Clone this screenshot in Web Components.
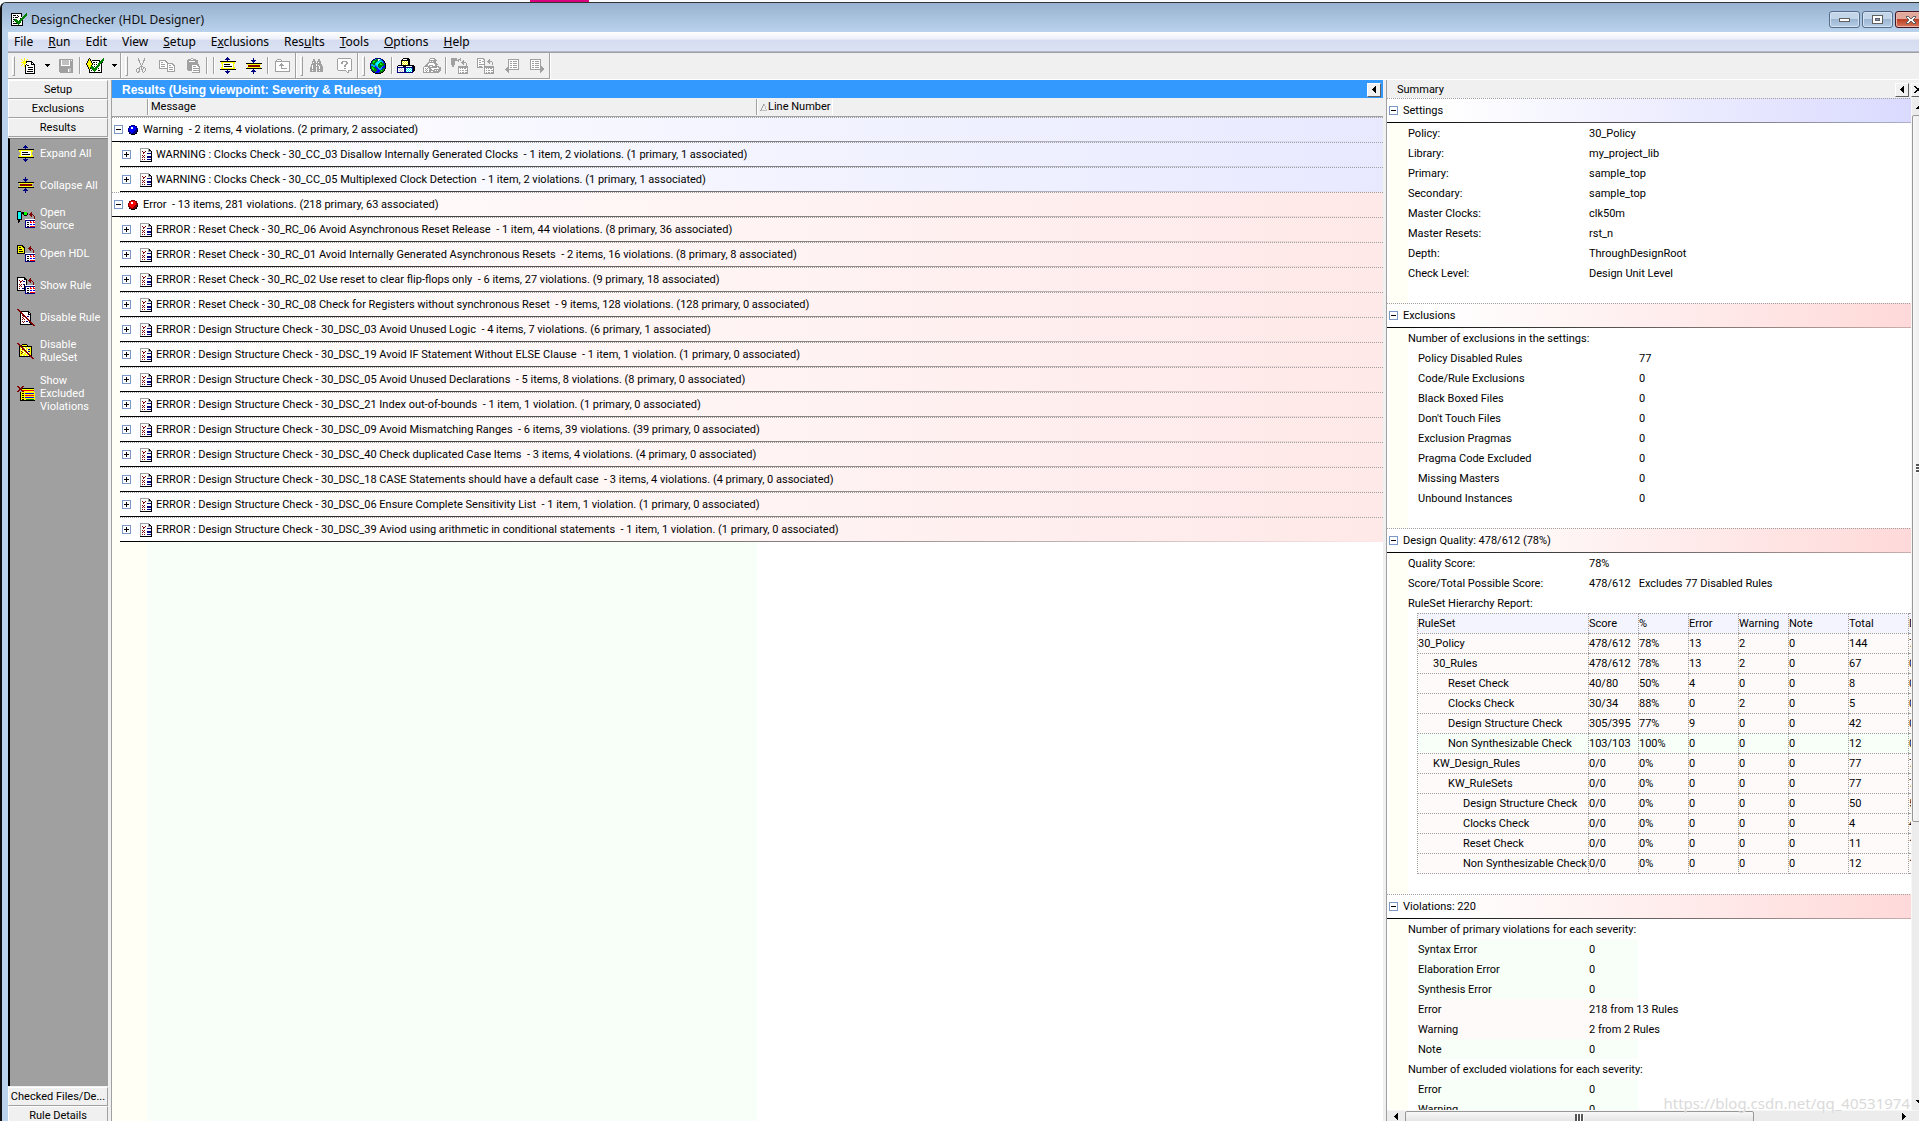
<!DOCTYPE html>
<html lang="en">
<head>
<meta charset="utf-8">
<title>DesignChecker (HDL Designer)</title>
<style>
  html, body { height: 100%; }
  body {
    margin: 0; overflow: hidden; background: #f8fbfd;
    --ui: Roboto, "Liberation Sans", sans-serif;
    --chrome: "Noto Sans", sans-serif;
    font: 11px/16px var(--ui); color: #000;
  }
</style>
</head>
<body>
<dc-app></dc-app>
<script>
const COLORS = { k:'#000', y:'#ffff00', w:'#fff', g:'#a0a0a0', b:'#000080', r:'#800000', c:'#00ffff', n:'#00ff00',
  R:'#ff0000', B:'#0000ff', G:'#008000', t:'#00a8e8', l:'#c0c0c0', d:'#606060', s:'#7b98c8', o:'#808000' };
const ART = {
  expand: `.......b........
......bbb.......
.....bbbbb......
.......b........
kkkkkkkkkkkkkkkk
.yyyyyyyyyyyyyy.
.yywwwwwwwwwwyy.
..ywkkkkkkwwwy..
..ywwwwwwwwwwy..
..ywkkkkkkkkwy..
.yywwwwwwwwwwyy.
.yyyyyyyyyyyyyy.
kkkkkkkkkkkkkkkk
.......b........
.....bbbbb......
......bbb.......
.......b........`,
  collapse: `.......b........
.......b........
.....bbbbb......
......bbb.......
.......b........
kkkkkkkkkkkkkkkk
.yyyyyyyyyyyyyy.
..rrrrrrrrrrrr..
..rrrrrrrrrrrr..
.yyyyyyyyyyyyyy.
kkkkkkkkkkkkkkkk
.......b........
......bbb.......
.....bbbbb......
.......b........
.......b........`,
  newdoc: `...y............
y..y..y.........
.y.y.y..........
..yyykkkkkk.....
yyyyykwwwwkk....
..yyywwwwwkwk...
.y.y.kwwwwkkkk..
y..ykwkkwwwwwk..
...ykwwwwwwwwk..
....kwwkkkkkwk..
....kwwwwwwwwk..
....kwwkkkkkwk..
....kwwwwwwwwk..
....kwkkkkkkwk..
....kwwwwwwwwk..
....kkkkkkkkkk..`,
  save: `gggggggggggggg
ggwlllllllwgwg
ggwlllllllwggg
ggwlllllllwggg
ggwlllllllwggg
ggwlllllllwggg
ggwwwwwwwwwggg
gggggggggggggg
gggggggggggggg
ggggggggggllgg
gggggggggwllgg
gggggggggwllgg
gggggggggwllgg
.ggggggggggggg`,
  check: `...k.............G
..kyk...........GG
..kyk.kkkkkkkk.GGG
.kyyykwwwwwwwkGGG.
.kyyykwkkwkwwGGGk.
kyyyyykwwwwwGGGk..
kyyyyykwkwkwGGwk..
.kyyykwwwwwGGGwk..
.kyyyGGwkwGGGwwk..
..kyGGGGwGGGwwwk..
..kykGGGGGGwkwwk..
...kwwGGGGGwwwwk..
...kwkwGGGwwkkwk..
...kwwwwGwwwwwwk..
...kkkkkkkkkkkkk..`,
  app: `kkkkkkkkkkk....G
kwwwwwwwwwk...GG
kwkkkwkwwwk..GGG
kwwwwwwkwwk.GGG.
kwkwkkkwwwwGGG..
kwwwwwwwwkGGG...
kwkkGGwwwGGG....
kwwGGGGwGGGk....
kwkwGGGGGGwk....
kwwwwGGGGGwk....
kwkkkkGGGwwk....
kwwwwwwGwwwk....
kkkkkkkkkkkk....`,
  cut: `...g.....g...
...g.....g...
...gg...gg...
....g...g....
....g...g....
.....g.g.....
.....g.g.....
......g......
.....ggg.....
....g.g.gg...
..ggg.g.g.g..
.g..g.gg..g..
.g..g..g..g..
.g.gg..g.g...
..gg....g....`,
  copy: `ggggggg.........
gwwwwwgg........
gwggwwwgg.......
gwwwwwwwgggggg..
gwggggwwgwwwwgg.
gwwwwwwwgwggwwgg
gwggggwwgwwwwwwg
gwwwwwwwgwggggwg
gggggggggwwwwwwg
........gwggggwg
........gwwwwwwg
........gggggggg`,
  paste: `.....gg........
..gggwwggg.....
.ggggggggggg...
.ggwwwwwwggg...
.ggggggggggg...
.ggggggggggg...
.gggggggggggg..
.gggggwwwwwgg..
.gggggwgggwwgg.
.gggggwwwwwwwg.
.gggggwggggggg.
.gggggwwwwwwwg.
..ggggwggggggg.
......wwwwwwwg.
......gggggggg.`,
  folder: `..gggg.........
.gwwwwg........
ggggggggggggggg
gwwwwwwwwwwwwwg
gwwwwwgwwwwwwwg
gwwwwgggwwwwwwg
gwwwgggggwwwwwg
gwwwwwgwwwwwwwg
gwwwwwgwwwwwwwg
gwwwwwggggggwwg
gwwwwwwwwwwwwwg
gwwwwwwwwwwwwwg
ggggggggggggggg`,
  find: `...gg...gg.....
...gg...gg.....
..gggg.gggg....
..gwgg.gwgg....
..ggggggggg....
.gggggwggggg...
.gwgggwgwggg...
.gwggggggwggg..
ggwgggwggwggg..
ggwggg.ggwggg..
gggggg.gggggg..
ggwggg.ggwggg..
gggggg.gggggg..`,
  help: `.ggggggggggggg.
gwwwwwwwwwwwwwg
gwwwwwwwwwwwwwg
gwwwwgggggwwwwg
gwwwggwwwggwwwg
gwwwggwwwggwwwg
gwwwwwwwggwwwwg
gwwwwwwggwwwwwg
gwwwwwwggwwwwwg
gwwwwwwwwwwwwwg
gwwwwwwggwwwwwg
gwwwwwwwwwwwwwg
.ggggggggwwgggg
.........gwg...
..........gg...`,
  globe: `.....bbbbbb.....
...bbtGGwwtbb...
..bGGGGGwtttbk..
.bGnnGGttccttBk.
.bGnGGtcccGGtBk.
bGGGGtcccGnGGGBk
bttGGtccGGnnGGGk
bttttttcGGGGGGBk
bGGttBttGGGGtBBk
bGnGGBBttGGtBBBk
bGnnGGBBttttBGGk
.bGnGGGBBttBGGk.
.bGGGGGBBBGnGGk.
..kBGGBBBBGGGk..
...kkBBBBGGkk...
.....kkkkkk.....`,
  cubes: `......kkkkkk......
.....kwwwwkkk.....
....kkkkkkkkk.....
....kywywywkk.....
....kwywywykk.....
....kywywywkk.....
....kwywywykk.....
.kkkkkkkkkkkkkkkk.
kwwwwwkkkwwwwwwkkk
bbbbbbbbbbbbbbbbkk
bwlwlwwbbwcwcwcbkk
bwwlwlwbbcwcwcwbkk
bwlwlwwbbwcwcwcbkk
bwwlwlwbbcwcwcwbk.
bbbbbbbbbbbbbbbb..`,
  cubesgray: `.......ggggg......
......gwwwwgg.....
......gggggggg....
......gwgwggg.....
.....gggggggg.....
....ggwwwwwggg....
...ggwwwwwwwggg...
..gggwggggwwgg....
.ggggggwwggggggg..
gwwwwgggggggggwggg
gwgwgwggwwwwwwwwgg
gwwgwwgggwwggggggg
gwgwgwggggggwgwggg
gwwgwwggwwggggggg.
gggggggggggggggg..`,
  src: `gggggg...g........
gggggg.ggg........
gggggggg.g..g.....
gggg...g...gg.....
gggg......ggggg...
gggg.......gg..g..
gggg........g..g..
.gg............g..
.gg....gggggggggg.
.......gggggggggg.
.......gwgwgwggwg.
.......gwwwwwwwwg.
.......gwgwggwggg.
.......gwwwwwwwwg.
.......gwgwggwggg.
.......gggggggggg.`,
  hdl: `ggggggg...........
gwwwwwgg....g.....
gwggwwwg...gg.....
gwwwwggg..ggggg...
gwggwwwg...gg..g..
gwwwwwwg....g..g..
gwgggggg.......g..
gwwwwwwg..........
gwggg..gggggggggg.
gggggg.gggggggggg.
.......gwgwgwggwg.
.......gwwwwwwwwg.
.......gwgwggwggg.
.......gwwwwwwwwg.
.......gwgwggwggg.
.......gggggggggg.`,
  prev: `...ggggggggggg
...gwwwwwwwwwg
...gwggwggggwg
...gwwwwwwwwwg
...gwggwggggwg
...gwwwwwwwwwg
...gwggwggggwg
...gwwwwwwwwwg
..ggwggwggggwg
.gggwwwwwwwwwg
gggggggggggggg
.ggg..........
..gg..........
...g..........`,
  next: `ggggggggggg...
gwwwwwwwwwg...
gwggwggggwg...
gwwwwwwwwwg...
gwggwggggwg...
gwwwwwwwwwg...
gwggwggggwg...
gwwwwwwwwwgg..
gwggwggggwggg.
gwwwwwwwwwgggg
gggggggggggggg
..........ggg.
..........gg..
..........g...`,
  ball_blue: `...bbbb...
.bbBBBBbb.
.bBwwBBBb.
bBBwwBBBbb
bBBBBBBBbb
bBBBBBBbbk
bbBBBBbbbk
.bbBBbbbk.
.kbbbbbkk.
...kkkk...`,
  ball_red: `...rrrr...
.rrRRRRrr.
.rRwwRRRr.
rRRwwRRRrr
rRRRRRRRrr
rRRRRRRrrk
rrRRRRrrrk
.rrRRrrrk.
.krrrrrkk.
...kkkk...`,
  rule: `ggggggggg...
gwwwwwwwgk..
gwwwwwwwgkk.
gwrwwrwwgggk
gwwrrwwwwwwk
gwwrwwwbbbbk
gwwwwwwwwwwk
gwrwrwwwwwwk
gwwrwwwbbbbk
gwrwrwwbbbbk
gwwwwwwwwwwk
gwrwrwwbbbbk
gwwwwwwwwwwk
kkkkkkkkkkkk`,
  opensource: `kkkk..............
kccckkknnn....r...
kccckkknnnk..rr...
kccck.knnnk.rrrr..
kccck..kkk...rr.r.
kccck.........r..r
kccck............r
kccck............r
kkkkk...wwwwwwwwww
.kk.....bbbbbbbbbb
.kk.....bwwwwRwwRw
.k......bwkkwRRwRR
........bwwwwwwwww
........bwkkwBBwBB
........bwwwwwwwww
........bwkkwRRRRR
........bbbbbbbbbb`,
  openhdl: `kkkkkk............
kyyyykk......r....
kykkyykk....rr....
kyyyyyyk...rrrr...
kykkkyyk....rr.r..
kyyyyyyk.....r..r.
kykkkkyk........r.
kyyyyyyk........r.
kkkkkkkkwwwwwwwwww
........bbbbbbbbbb
........bwwwwRwwRw
........bwkkwRRwRR
........bwwwwwwwww
........bwkkwBBwBB
........bwwwwwwwww
........bwkkwRRRRR
........bbbbbbbbbb`,
  showrule: `kkkkkkkk..........
kwwwwwwkk....r....
kwwwwwwkkk..rr....
kwrwwrwwwk.rrrr...
kwwrrwbbwk..rr.r..
kwwrwwwwwk...r..r.
kwwwwwwwwk......r.
kwrwrwbbwk......r.
kwwrwwwkwwwwwwwwww
kwrwrwwkbbbbbbbbbb
kwwwwwwkbwwwwRwwRw
kwrwwbbkbwkkwRRwRR
kwwwwwwkbwwwwwwwww
kkkkkkkkbwkkwBBwBB
........bwwwwwwwww
........bwkkwRRRRR
........bbbbbbbbbb`,
  disrule: `rr................
.rr...............
..rrkkkkkkkk......
...rrwwwwwwkk.....
...krrwwwwwkwk....
...kwrrwwwwkkk....
...kwrrrwwwwwk....
...kwwrrrwbbwk....
...kwrwwrrwwwk....
...kwwrwwrrwwk....
...kwrwrwwrrwk....
...kwwwwwwwrrk....
...kwrwrwbbwrr....
...kwwrwwwwwkrr...
...kwwwwwwwwwkrr..
...kkkkkkkkkkkkrr.
................rr`,
  disset: `rr................
.rr..kkkkk........
..rrkyyyyyk.......
..krrkkkkkkkkkk...
..kyrrywyywyyyk...
..kywrrywyywyyk...
..kyyrrrwywbbyk...
..kywyyrrywyyyk...
..kyrywyrrwbbyk...
..kyyrywyrrwyyk...
..kyrywyywrryyk...
..kyyyyyyyyrryk...
..kyywyywyywrrk...
..kkkkkkkkkkkrr...
..............rr..
...............rr.`,
  showex: `rr...rr...........
.rr.rr............
..rrrkkkkkkkkkkkk.
..rrryyyyyyyyyyyy.
.rr.rrRRRRRRRRRRR.
rr...rryyyyyyyyyy.
...kyyyyyyyyyyyyyy
...kykkyBBBBBBBBBy
...kyyyyyyyyyyyyyy
...kykkyRRRRRRRRRy
...kyyyyyyyyyyyyyy
...kykkyBBBBBBBBBy
...kyyyyyyyyyyyyyy
...kykkyyGGGGGGGGy
...kkkkkkkkkkkkkkk`,
  plus: `sssssssss
swwwwwwws
swwwkwwws
swwwkwwws
swkkkkkws
swwwkwwws
swwwkwwws
swwwwwwws
sssssssss`,
  minus: `sssssssss
swwwwwwws
swwwwwwws
swwwwwwws
swkkkkkws
swwwwwwws
swwwwwwws
swwwwwwws
sssssssss`,
  drop: `kkkkk
.kkk.
..k..`,
  left: `...k
..kk
.kkk
kkkk
.kkk
..kk
...k`,
  right: `k...
kk..
kkk.
kkkk
kkk.
kk..
k...`,
  up: `...k...
..kkk..
.kkkkk.
kkkkkkk`,
  down: `kkkkkkk
.kkkkk.
..kkk..
...k...`,
  close: `kk....kk
.kk..kk.
..kkkk..
...kk...
..kkkk..
.kk..kk.
kk....kk`,
  sort: `...gl..
...gl..
..g..l.
..g..l.
.g...l.
.g....l
gllllll`,
  min: `ddddddddddd
dwwwwwwwwwd
dwwwwwwwwwd
ddddddddddd`,
  max: `ddddddddddd
dwwwwwwwwwd
dwwwwwwwwwd
dwwdddddwwd
dwwdsssdwwd
dwwdddddwwd
dwwwwwwwwwd
dwwwwwwwwwd
ddddddddddd`,
  wclose: `ddd....ddd
dwwd..dwwd
.dwwddwwd.
..dwwwwd..
..dwwwwd..
.dwwddwwd.
dwwd..dwwd
ddd....ddd`
};
const el = (name, html) => customElements.define(name, class extends HTMLElement {
  connectedCallback() {
    if (this.shadowRoot) return;
    const t = document.createElement('template');
    t.innerHTML = `<style>*{box-sizing:border-box}button{font:inherit;color:inherit;border:0;padding:0;margin:0;background:none;white-space:nowrap}</style>` +
      (typeof html === 'function' ? html(this) : html);
    this.attachShadow({ mode: 'open' }).append(t.content.cloneNode(true));
  }
});
const ic = n => `<dc-icon name="${n}"></dc-icon>`;

el('dc-icon', h => {
  const rows = ART[h.getAttribute('name')].split('\n'), w = Math.max(...rows.map(r => r.length));
  let s = '';
  rows.forEach((r, y) => { for (let x = 0; x < r.length;) {
    let e = x + 1; while (r[e] === r[x]) e++;
    if (COLORS[r[x]]) s += `<rect x="${x}" y="${y}" width="${e - x}" height="1" fill="${COLORS[r[x]]}"/>`;
    x = e;
  } });
  return `<style>:host{display:block;flex:none}svg{display:block}</style>
  <svg width="${w}" height="${rows.length}" shape-rendering="crispEdges" aria-hidden="true">${s}</svg>`;
});

el('dc-title', `<style>
  :host{display:flex;align-items:center;height:29px;padding:4px 0 0 9px;box-sizing:border-box;background:linear-gradient(#97b2cf,#bad2ec);font:12px/18px var(--chrome)}
  h1{font:inherit;margin:0;padding-left:4px;flex:1;color:#111}
  div{display:flex;gap:2px}
  button{width:31px;height:17px;border:1px solid #536c8a;border-radius:3px;background:linear-gradient(#c3d5e8 45%,#9cb6d2 50%,#b6cde6);display:grid;place-items:center;box-shadow:inset 0 0 0 1px #d5e3f2}
  .x{background:linear-gradient(#e2a89c 45%,#b93f26 50%,#d8775c);border-color:#431422;box-shadow:inset 0 0 0 1px #e9b5a8;margin-right:-7px}
</style>${ic('app')}<h1>DesignChecker (HDL Designer)</h1>
<div><button aria-label="Minimize">${ic('min')}</button><button aria-label="Maximize">${ic('max')}</button><button class="x" aria-label="Close">${ic('wclose')}</button></div>`);

el('dc-menu', `<style>
  :host{display:flex;gap:15px;padding-left:6px;height:20px;align-items:center;background:linear-gradient(#fff,#eef1f9 35%,#d5dcf0 45%,#dbe2f3);border-bottom:1px solid #b4b8d0;font:12px/18px var(--chrome)}
</style>` + ['File','<u>R</u>un','Edit','View','<u>S</u>etup','E<u>x</u>clusions','Res<u>u</u>lts','<u>T</u>ools','<u>O</u>ptions','<u>H</u>elp'].map(t => `<button>${t}</button>`).join(''));

const tool = (n, w = 26) => `<button style="width:${w}px" aria-label="${n}">${ic(n)}</button>`;
el('dc-toolbar', `<style>
  :host{display:flex;height:28px;box-sizing:border-box;background:#f0f0f0;border-bottom:1px solid #fff;border-top:1px solid #a0a0a0}
  .band{display:flex;align-items:center;border-right:1px solid #a0a0a0;border-bottom:1px solid #a0a0a0;box-shadow:1px 0 #fff;padding-left:4px}
  .band::before{content:"";box-sizing:border-box;width:3px;height:20px;border:1px solid;border-color:#fff #a0a0a0 #a0a0a0 #fff}
  button{display:grid;place-items:center;height:22px}
  i{width:2px;height:17px;border-left:1px solid #a0a0a0;border-right:1px solid #fff}
</style>
<div class="band">${tool('newdoc',27)}${tool('drop',11)}${tool('save',26)}<i></i>${tool('check',28)}${tool('drop',11)}</div>
<div class="band">${tool('cut')}${tool('copy')}${tool('paste')}<i></i><i style="margin-left:5px"></i>${tool('expand')}${tool('collapse')}<i></i>${tool('folder')}</div>
<div class="band">${tool('find',28)}${tool('help')}</div>
<div class="band">${tool('globe')}<i></i>${tool('cubes')}${tool('cubesgray')}<i></i>${tool('src')}${tool('hdl')}${tool('prev')}${tool('next',24)}</div>`);

el('dc-side', `<style>
  :host{display:flex;flex-direction:column;width:100px;flex:none;background:#f0f0f0;margin-bottom:-4px}
  .tab{flex:none;height:19px;line-height:18px;text-align:center;border:1px solid;border-color:#fff #a0a0a0 #a0a0a0 #fff;overflow:hidden}
  nav{flex:1;background:#a0a0a0;border-left:2px solid #000;border-top:1px solid #808080;margin:1px 0 1px 0;padding:5px 0 0 6px;display:flex;flex-direction:column;gap:10px}
  nav button{display:grid;grid-template-columns:20px 1fr;column-gap:4px;align-items:center;justify-items:center;text-align:left;color:#fff;line-height:13px;min-height:22px}
  nav button:first-child{margin-top:-2px}
  span{justify-self:start}
</style>
<button class="tab">Setup</button><button class="tab">Exclusions</button><button class="tab">Results</button>
<nav>` + [['expand','Expand All'],['collapse','Collapse All'],['opensource','Open<br>Source'],['openhdl','Open HDL'],['showrule','Show Rule'],['disrule','Disable Rule'],['disset','Disable<br>RuleSet'],['showex','Show<br>Excluded<br>Violations']].map(([i,t]) => `<button>${ic(i)}<span>${t}</span></button>`).join('') +
`</nav><button class="tab">Checked Files/De...</button><button class="tab">Rule Details</button>`);

el('dc-row', h => `<style>
  :host{display:flex;align-items:center;height:25px;padding-left:2px;box-sizing:border-box;
    background:linear-gradient(90deg,#000,transparent) bottom/100% 1px no-repeat,repeating-linear-gradient(90deg,#a0a0a0 0 1px,transparent 1px 2px) top/100% 1px no-repeat,linear-gradient(90deg,#fff,var(--tint,#ffe8e8))}
  :host([kind=warning]){--tint:#e8e9ff}
  :host([child]){margin-left:8px}
  .i{width:20px;display:grid;place-items:center}
  :host([child]) .i{width:25px;padding-left:5px}
  .t{white-space:pre}
</style>${ic(h.hasAttribute('child') ? 'plus' : 'minus')}<div class="i">${ic(h.hasAttribute('child') ? 'rule' : h.getAttribute('kind') === 'warning' ? 'ball_blue' : 'ball_red')}</div><div class="t"><slot></slot></div>`);

const W = 'WARNING : Clocks Check - ', R = 'ERROR : Reset Check - ', D = 'ERROR : Design Structure Check - ';
const ROWS = [
  ['warning',0,'Warning  - 2 items, 4 violations. (2 primary, 2 associated)'],
  ['warning',1,W+'30_CC_03 Disallow Internally Generated Clocks  - 1 item, 2 violations. (1 primary, 1 associated)'],
  ['warning',1,W+'30_CC_05 Multiplexed Clock Detection  - 1 item, 2 violations. (1 primary, 1 associated)'],
  ['error',0,'Error  - 13 items, 281 violations. (218 primary, 63 associated)'],
  ['error',1,R+'30_RC_06 Avoid Asynchronous Reset Release  - 1 item, 44 violations. (8 primary, 36 associated)'],
  ['error',1,R+'30_RC_01 Avoid Internally Generated Asynchronous Resets  - 2 items, 16 violations. (8 primary, 8 associated)'],
  ['error',1,R+'30_RC_02 Use reset to clear flip-flops only  - 6 items, 27 violations. (9 primary, 18 associated)'],
  ['error',1,R+'30_RC_08 Check for Registers without synchronous Reset  - 9 items, 128 violations. (128 primary, 0 associated)'],
  ['error',1,D+'30_DSC_03 Avoid Unused Logic  - 4 items, 7 violations. (6 primary, 1 associated)'],
  ['error',1,D+'30_DSC_19 Avoid IF Statement Without ELSE Clause  - 1 item, 1 violation. (1 primary, 0 associated)'],
  ['error',1,D+'30_DSC_05 Avoid Unused Declarations  - 5 items, 8 violations. (8 primary, 0 associated)'],
  ['error',1,D+'30_DSC_21 Index out-of-bounds  - 1 item, 1 violation. (1 primary, 0 associated)'],
  ['error',1,D+'30_DSC_09 Avoid Mismatching Ranges  - 6 items, 39 violations. (39 primary, 0 associated)'],
  ['error',1,D+'30_DSC_40 Check duplicated Case Items  - 3 items, 4 violations. (4 primary, 0 associated)'],
  ['error',1,D+'30_DSC_18 CASE Statements should have a default case  - 3 items, 4 violations. (4 primary, 0 associated)'],
  ['error',1,D+'30_DSC_06 Ensure Complete Sensitivity List  - 1 item, 1 violation. (1 primary, 0 associated)'],
  ['error',1,D+'30_DSC_39 Aviod using arithmetic in conditional statements  - 1 item, 1 violation. (1 primary, 0 associated)']];
const SQ = `.sq{width:14px;height:14px;background:#f0f0f0;border:1px solid;border-color:#fff #606060 #606060 #fff;display:grid;place-items:center;flex:none;overflow:hidden}`;
el('dc-results', `<style>${SQ}
  :host{display:flex;flex-direction:column;flex:1;min-width:0;border-left:1px solid #a0a0a0;background:#fff}
  header{display:flex;align-items:center;justify-content:space-between;height:18px;flex:none;padding:1px 2px 0 10px;background:#3399ff;color:#fff}
  h2{font:bold 12px/16px "Liberation Sans",sans-serif;margin:0}
  .cols{display:flex;height:19px;flex:none;background:#f0f0f0;border-bottom:1px solid #a0a0a0}
  .cols button{text-align:left;padding-left:3px;border-right:1px solid #a0a0a0;box-shadow:1px 0 #fff;display:flex;align-items:center;gap:1px;margin:1px 0}
  .a{width:36px}.m{width:609px}.cols .l{width:76px;border-color:#fff;box-shadow:none}
  .body{flex:1;background:linear-gradient(90deg,#fffff5 35px,#f8fff8 35px 645px,#fff 645px)}
</style>
<header><h2>Results (Using viewpoint: Severity &amp; Ruleset)</h2><button class="sq" aria-label="Collapse">${ic('left')}</button></header>
<div class="cols"><button class="a" aria-label="Icon column"></button><button class="m">Message</button><button class="l">${ic('sort')}Line Number</button></div>
<div class="body">` + ROWS.map(([k,c,t]) => `<dc-row kind="${k}" ${c ? 'child' : ''}>${t}</dc-row>`).join('') + `</div>`);

el('dc-section', `<style>
  :host{display:block}
  h3{font:inherit;margin:0;height:25px;display:flex;align-items:center;gap:5px;padding-left:2px;
   background:linear-gradient(90deg,#000,#0003) bottom/100% 1px no-repeat,repeating-linear-gradient(90deg,#a0a0a0 0 1px,transparent 1px 2px) top/100% 1px no-repeat,linear-gradient(90deg,#fff 10%,var(--tint,#ffd9d9))}
  :host([blue]){--tint:#dadaff}
  div{padding:0 0 20px 21px;background:linear-gradient(90deg,#fff 2px,#fffff5 2px 21px,#fff 21px)}
</style><h3>${ic('minus')}<slot name="title"></slot></h3><div><slot></slot></div>`);

el('dc-field', h => `<style>
  :host{display:grid;grid-template-columns:181px auto 1fr;box-sizing:border-box;padding-top:1px;line-height:20px;height:20px;white-space:nowrap}
  :host([sub]){margin-left:10px;grid-template-columns:171px auto 1fr;background:linear-gradient(90deg,var(--bg,transparent) 220px,transparent 220px)}
  :host([wide]){grid-template-columns:221px auto 1fr}
  :host([tone=ok]){--bg:#f8fff8}:host([tone=bad]){--bg:#fffafa}
  .n{padding-left:8px}
</style><span><slot></slot></span><span>${h.getAttribute('value') || ''}</span><span class="n">${h.getAttribute('note') || ''}</span>`);

const T = [['30_Policy',0,'478/612','78%',13,2,0,144,77],['30_Rules',1,'478/612','78%',13,2,0,67,0],['Reset Check',2,'40/80','50%',4,0,0,8,0],['Clocks Check',2,'30/34','88%',0,2,0,5,0],['Design Structure Check',2,'305/395','77%',9,0,0,42,0],['Non Synthesizable Check',2,'103/103','100%',0,0,0,12,0],['KW_Design_Rules',1,'0/0','0%',0,0,0,77,77],['KW_RuleSets',2,'0/0','0%',0,0,0,77,77],['Design Structure Check',3,'0/0','0%',0,0,0,50,50],['Clocks Check',3,'0/0','0%',0,0,0,4,4],['Reset Check',3,'0/0','0%',0,0,0,11,11],['Non Synthesizable Check',3,'0/0','0%',0,0,0,12,12]];
el('dc-report', `<style>
  :host{display:block;margin-left:9px;overflow:hidden}
  table{border-collapse:separate;border-spacing:0;table-layout:fixed;width:542px;border-left:1px dotted #a0a0a0}
  th,td{font-weight:normal;text-align:left;padding:0;height:20px;line-height:19px;border-top:1px dotted #a0a0a0;border-right:1px dotted #a0a0a0;background:#fffafa;white-space:nowrap}
  th{background:#f4f4ff}.ok td{background:#f8fff8}
  tr:last-child td{border-bottom:1px dotted #a0a0a0}
  .d1{padding-left:15px}.d2{padding-left:30px}.d3{padding-left:45px}
</style><table><colgroup><col style="width:171px"><col style="width:50px"><col style="width:50px"><col style="width:50px"><col style="width:50px"><col style="width:60px"><col style="width:60px"><col style="width:50px"></colgroup>
<thead><tr>${['RuleSet','Score','%','Error','Warning','Note','Total','D'].map(t => `<th>${t}</th>`).join('')}</tr></thead><tbody>` +
T.map(r => `<tr class="${r[3] === '100%' ? 'ok' : ''}"><td class="d${r[1]}">${r[0]}</td>${r.slice(2).map(v => `<td>${v}</td>`).join('')}</tr>`).join('') + `</tbody></table>`);

const f = (l, v, a = '') => `<dc-field value="${v}" ${a}>${l}</dc-field>`;
el('dc-summary', `<style>${SQ}
  :host{display:flex;flex-direction:column;flex:0 0 533px;min-width:0;border-left:1px solid #a0a0a0;background:#f0f0f0;overflow:hidden}
  header{display:flex;align-items:center;height:18px;flex:none;padding:1px 0 0 10px;gap:2px}
  h2{font:inherit;margin:0;flex:1}
  header .sq:last-child{margin-right:-6px}
  .mid{display:flex;flex:1;min-height:0}
  .view{flex:1;min-width:0;background:#fff;overflow:hidden}
  .v{width:8px;overflow:hidden;display:flex;flex-direction:column;align-items:flex-start;background:#ececec;border-left:1px solid #f6f6f6}
  .v dc-icon{margin:7px 0 6px 4px}
  .v b{height:707px;width:16px;border:1px solid #989898;border-radius:2px;background:linear-gradient(90deg,#f8f8f8,#e0e0e0);display:flex;align-items:center}
  .v b::before{content:"";width:8px;height:9px;margin-left:3px;background:repeating-linear-gradient(#555 0 2px,#fff 2px 3px)}
  .v dc-icon:last-child{margin:auto 0 6px 4px}
  .h{display:flex;height:11px;flex:none;overflow:hidden;background:#ececec;align-items:flex-start;border-top:1px solid #f6f6f6}
  .h dc-icon{margin:2px 7px}
  .h b{height:17px;width:349px;border:1px solid #989898;border-radius:2px;background:linear-gradient(#f8f8f8,#d8d8d8);display:flex;justify-content:center}
  .h b::before{content:"";width:9px;height:8px;margin-top:2px;background:repeating-linear-gradient(90deg,#555 0 2px,#fff 2px 3px)}
  .h dc-icon:last-child{margin-left:auto;margin-right:13px}
</style>
<header><h2>Summary</h2><button class="sq" aria-label="Collapse">${ic('left')}</button><button class="sq" aria-label="Close">${ic('close')}</button></header>
<div class="mid"><div class="view">
<dc-section blue><span slot="title">Settings</span>${f('Policy:','30_Policy')}${f('Library:','my_project_lib')}${f('Primary:','sample_top')}${f('Secondary:','sample_top')}${f('Master Clocks:','clk50m')}${f('Master Resets:','rst_n')}${f('Depth:','ThroughDesignRoot')}${f('Check Level:','Design Unit Level')}</dc-section>
<dc-section><span slot="title">Exclusions</span>${f('Number of exclusions in the settings:','')}${f('Policy Disabled Rules','77','sub wide')}${['Code/Rule Exclusions','Black Boxed Files',"Don't Touch Files",'Exclusion Pragmas','Pragma Code Excluded','Missing Masters','Unbound Instances'].map(t => f(t,'0','sub wide')).join('')}</dc-section>
<dc-section><span slot="title">Design Quality: 478/612 (78%)</span>${f('Quality Score:','78%')}${f('Score/Total Possible Score:','478/612','note="Excludes 77 Disabled Rules"')}${f('RuleSet Hierarchy Report:','')}<dc-report></dc-report></dc-section>
<dc-section><span slot="title">Violations: 220</span>${f('Number of primary violations for each severity:','')}${['Syntax Error','Elaboration Error','Synthesis Error'].map(t => f(t,'0','sub tone="ok"')).join('')}${f('Error','218 from 13 Rules','sub tone="bad"')}${f('Warning','2 from 2 Rules','sub tone="bad"')}${f('Note','0','sub tone="ok"')}${f('Number of excluded violations for each severity:','')}${f('Error','0','sub tone="ok"')}${f('Warning','0','sub tone="ok"')}</dc-section>
</div><div class="v">${ic('up')}<b></b>${ic('down')}</div></div>
<div class="h">${ic('left')}<b></b>${ic('right')}</div>`);

el('dc-app', `<style>
  :host{display:flex;flex-direction:column;height:100vh;overflow:hidden;position:relative}
  .strip{height:2px;flex:none;background:linear-gradient(90deg,transparent 530px,#d8007c 530px 589px,transparent 589px)}
  .win{flex:1;min-height:0;display:flex;flex-direction:column;border-left:2px solid #111;border-top:1px solid #333;border-radius:6px 0 0 0;overflow:hidden;background:#bad2ec}
  .in{flex:1;min-height:0;display:flex;flex-direction:column;margin-left:6px;background:#f0f0f0}
  .main{flex:1;min-height:0;display:flex;gap:3px}
  .mark{position:absolute;right:9px;bottom:6px;font:15px/24px var(--chrome);color:#dadada;text-shadow:0 0 1px #fff}
</style><div class="strip"></div><div class="win"><dc-title></dc-title><div class="in"><dc-menu></dc-menu><dc-toolbar></dc-toolbar>
<div class="main"><dc-side></dc-side><dc-results></dc-results><dc-summary></dc-summary></div></div></div>
<div class="mark">https://blog.csdn.net/qq_40531974</div>`);
</script>
</body>
</html>
